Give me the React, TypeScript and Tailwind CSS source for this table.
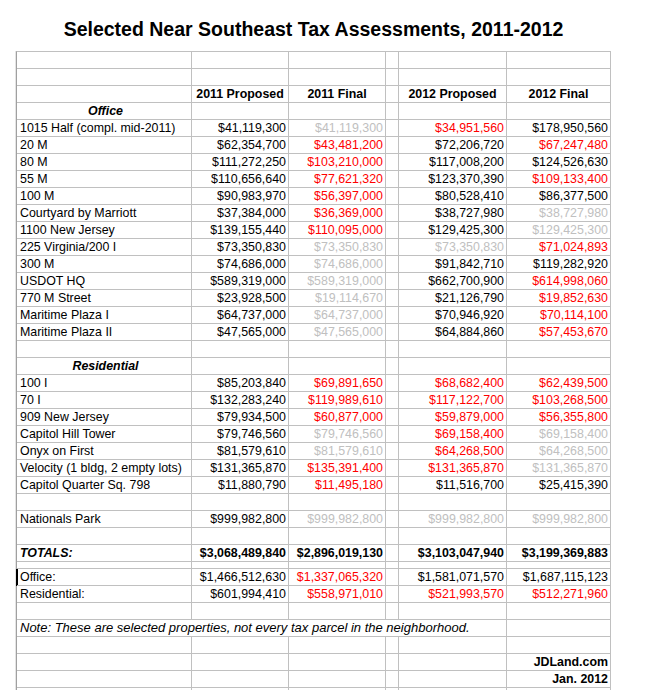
import React from 'react';

type Tone = 'k' | 'r' | 'g';
type Cell = [string, Tone];

const office: [string, Cell[]][] = [
  ['1015 Half (compl. mid-2011)', [['$41,119,300', 'k'], ['$41,119,300', 'g'], ['$34,951,560', 'r'], ['$178,950,560', 'k']]],
  ['20 M', [['$62,354,700', 'k'], ['$43,481,200', 'r'], ['$72,206,720', 'k'], ['$67,247,480', 'r']]],
  ['80 M', [['$111,272,250', 'k'], ['$103,210,000', 'r'], ['$117,008,200', 'k'], ['$124,526,630', 'k']]],
  ['55 M', [['$110,656,640', 'k'], ['$77,621,320', 'r'], ['$123,370,390', 'k'], ['$109,133,400', 'r']]],
  ['100 M', [['$90,983,970', 'k'], ['$56,397,000', 'r'], ['$80,528,410', 'k'], ['$86,377,500', 'k']]],
  ['Courtyard by Marriott', [['$37,384,000', 'k'], ['$36,369,000', 'r'], ['$38,727,980', 'k'], ['$38,727,980', 'g']]],
  ['1100 New Jersey', [['$139,155,440', 'k'], ['$110,095,000', 'r'], ['$129,425,300', 'k'], ['$129,425,300', 'g']]],
  ['225 Virginia/200 I', [['$73,350,830', 'k'], ['$73,350,830', 'g'], ['$73,350,830', 'g'], ['$71,024,893', 'r']]],
  ['300 M', [['$74,686,000', 'k'], ['$74,686,000', 'g'], ['$91,842,710', 'k'], ['$119,282,920', 'k']]],
  ['USDOT HQ', [['$589,319,000', 'k'], ['$589,319,000', 'g'], ['$662,700,900', 'k'], ['$614,998,060', 'r']]],
  ['770 M Street', [['$23,928,500', 'k'], ['$19,114,670', 'g'], ['$21,126,790', 'k'], ['$19,852,630', 'r']]],
  ['Maritime Plaza I', [['$64,737,000', 'k'], ['$64,737,000', 'g'], ['$70,946,920', 'k'], ['$70,114,100', 'r']]],
  ['Maritime Plaza II', [['$47,565,000', 'k'], ['$47,565,000', 'g'], ['$64,884,860', 'k'], ['$57,453,670', 'r']]],
];

const residential: [string, Cell[]][] = [
  ['100 I', [['$85,203,840', 'k'], ['$69,891,650', 'r'], ['$68,682,400', 'r'], ['$62,439,500', 'r']]],
  ['70 I', [['$132,283,240', 'k'], ['$119,989,610', 'r'], ['$117,122,700', 'r'], ['$103,268,500', 'r']]],
  ['909 New Jersey', [['$79,934,500', 'k'], ['$60,877,000', 'r'], ['$59,879,000', 'r'], ['$56,355,800', 'r']]],
  ['Capitol Hill Tower', [['$79,746,560', 'k'], ['$79,746,560', 'g'], ['$69,158,400', 'r'], ['$69,158,400', 'g']]],
  ['Onyx on First', [['$81,579,610', 'k'], ['$81,579,610', 'g'], ['$64,268,500', 'r'], ['$64,268,500', 'g']]],
  ['Velocity (1 bldg, 2 empty lots)', [['$131,365,870', 'k'], ['$135,391,400', 'r'], ['$131,365,870', 'r'], ['$131,365,870', 'g']]],
  ['Capitol Quarter Sq. 798', [['$11,880,790', 'k'], ['$11,495,180', 'r'], ['$11,516,700', 'k'], ['$25,415,390', 'k']]],
];

const toneClass: Record<Tone, string> = {
  k: 'text-black',
  r: 'text-[#ff0000]',
  g: 'text-[#c0c0c0]',
};

// grid cell: right + bottom hairline, excel-ish
const cellBase = 'border-b border-r border-[#c0c0c0] leading-[16px] whitespace-nowrap overflow-visible';

function Row({ label, values, labelClass = '', valueClass = '', height = 'h-[17px]', leftMark = false }: {
  label?: React.ReactNode;
  values?: Cell[];
  labelClass?: string;
  valueClass?: string;
  height?: string;
  leftMark?: boolean;
}) {
  const v = values ?? [['', 'k'], ['', 'k'], ['', 'k'], ['', 'k']];
  return (
    <>
      <div className={`${cellBase} ${height} pl-[3px] ${labelClass} ${leftMark ? 'shadow-[-1px_0_0_#000,inset_1px_0_0_#000]' : ''}`}>{label}</div>
      <div className={`${cellBase} ${height} pr-[2px] text-right ${valueClass} ${toneClass[v[0][1]]}`}>{v[0][0]}</div>
      <div className={`${cellBase} ${height} pr-[2px] text-right ${valueClass} ${toneClass[v[1][1]]}`}>{v[1][0]}</div>
      <div className={`${cellBase} ${height}`} />
      <div className={`${cellBase} ${height} pr-[2px] text-right ${valueClass} ${toneClass[v[2][1]]}`}>{v[2][0]}</div>
      <div className={`${cellBase} ${height} pr-[2px] text-right ${valueClass} ${toneClass[v[3][1]]}`}>{v[3][0]}</div>
    </>
  );
}

function RightNote({ text }: { text: string }) {
  const c = `${cellBase} h-[17px]`;
  return (
    <>
      <div className={c} />
      <div className={c} />
      <div className={c} />
      <div className={c} />
      <div className={c} />
      <div className={`${c} pr-[2px] text-right font-bold`}>{text}</div>
    </>
  );
}

export default function App() {
  const c = `${cellBase} h-[17px]`;
  return (
    <div className="w-[650px] h-[700px] bg-white font-['Liberation_Sans',Arial,sans-serif] text-[12.4px] text-black">
      <div className="w-[611px] h-[51px] pt-[18px] pl-[16px] text-center text-[19.5px] leading-[22px] font-bold">
        Selected Near Southeast Tax Assessments, 2011-2012
      </div>
      <div className="ml-[15px] border-l border-[#e4e4e4]">
        <div className="grid w-[595px] grid-cols-[175px_97px_97px_13px_108px_104px] border-l border-t border-l-[#a0a0a0] border-t-[#c0c0c0]">
          <Row />
          <Row />
          <div className={c} />
          <div className={`${c} text-center font-bold`}>2011 Proposed</div>
          <div className={`${c} text-center font-bold`}>2011 Final</div>
          <div className={c} />
          <div className={`${c} text-center font-bold`}>2012 Proposed</div>
          <div className={`${c} text-center font-bold`}>2012 Final</div>
          <Row label={<div className="text-center font-bold italic">Office</div>} labelClass="pl-0" />
          {office.map(([name, vals]) => (
            <Row key={name} label={name} values={vals} />
          ))}
          <Row />
          <Row label={<div className="text-center font-bold italic">Residential</div>} labelClass="pl-0" />
          {residential.map(([name, vals]) => (
            <Row key={name} label={name} values={vals} />
          ))}
          <Row />
          <Row
            label="Nationals Park"
            values={[['$999,982,800', 'k'], ['$999,982,800', 'g'], ['$999,982,800', 'g'], ['$999,982,800', 'g']]}
          />
          <Row />
          <Row
            label="TOTALS:"
            labelClass="font-bold italic"
            valueClass="font-bold"
            values={[['$3,068,489,840', 'k'], ['$2,896,019,130', 'k'], ['$3,103,047,940', 'k'], ['$3,199,369,883', 'k']]}
          />
          <Row height="h-[7px]" />
          <Row
            label="Office:"
            leftMark
            values={[['$1,466,512,630', 'k'], ['$1,337,065,320', 'r'], ['$1,581,071,570', 'k'], ['$1,687,115,123', 'k']]}
          />
          <Row
            label="Residential:"
            values={[['$601,994,410', 'k'], ['$558,971,010', 'r'], ['$521,993,570', 'r'], ['$512,271,960', 'r']]}
          />
          <Row />
          <div className={`${c} col-span-5 pl-[3px] text-[13px] italic`}>
            Note: These are selected properties, not every tax parcel in the neighborhood.
          </div>
          <div className={c} />
          <Row />
          <RightNote text="JDLand.com" />
          <RightNote text="Jan. 2012" />
          <div className="h-[2px] border-r border-[#c0c0c0]" />
          <div className="h-[2px] border-r border-[#c0c0c0]" />
          <div className="h-[2px] border-r border-[#c0c0c0]" />
          <div className="h-[2px] border-r border-[#c0c0c0]" />
          <div className="h-[2px] border-r border-[#c0c0c0]" />
          <div className="h-[2px] border-r border-[#c0c0c0]" />
        </div>
      </div>
    </div>
  );
}
